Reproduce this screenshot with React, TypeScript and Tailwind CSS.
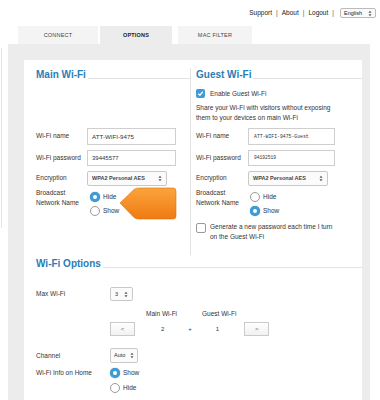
import React from 'react';

const Radio = ({ checked }: { checked?: boolean }) =>
  checked ? (
    <span className="w-[10px] h-[10px] rounded-full border-[3px] border-[#3f9bd6] bg-white shrink-0 shadow-[0_0_1px_#1c6fa8]" />
  ) : (
    <span className="w-[10px] h-[10px] rounded-full border border-[#9a9a9a] bg-white shrink-0" />
  );

const Arrows = () => (
  <svg width="4" height="7" viewBox="0 0 4 7" className="shrink-0">
    <path d="M0.5 2.8 L2 0.8 L3.5 2.8 Z M0.5 4.2 L2 6.2 L3.5 4.2 Z" fill="#555" />
  </svg>
);

const Heading = ({ children, className = '' }: { children: React.ReactNode; className?: string }) => (
  <div className={`flex items-end h-[12px] ${className}`}>
    <span className="text-[10px] font-bold leading-[12px] text-[#2a7db6]">{children}</span>
    <span className="flex-1 h-px bg-[#e2e2e2] ml-[2px] mb-[2px]" />
  </div>
);

export default function App() {
  return (
    <div className="w-[380px] h-[400px] overflow-hidden bg-white text-[#333] font-['Liberation_Sans',Arial,sans-serif]">
      {/* barra superior */}
      <div className="h-[26px] flex items-center justify-end pr-[4px] text-[6.5px] text-[#222]">
        <span>Support</span>
        <span className="mx-[4px] text-[#555]">|</span>
        <span>About</span>
        <span className="mx-[4px] text-[#555]">|</span>
        <span>Logout</span>
        <span className="mx-[4px] text-[#555]">|</span>
        <span className="ml-[2px] h-[10px] w-[36px] border border-[#bbb] rounded-[2px] flex items-center justify-between px-[3px] text-[5.5px] bg-[#fafafa]">
          English <Arrows />
        </span>
      </div>

      {/* abas */}
      <div className="flex h-[18px] pl-[18px] text-[5.5px] tracking-[0.2px]">
        <div className="w-[80px] bg-[#f4f4f4] flex items-center justify-center text-[#444]">CONNECT</div>
        <div className="w-[72px] ml-[2px] bg-[#ececec] flex items-center justify-center font-bold text-[#222]">OPTIONS</div>
        <div className="w-[74px] ml-[6px] bg-[#f4f4f4] flex items-center justify-center text-[#444]">MAC FILTER</div>
      </div>

      <div className="flex">
        <div className="w-px ml-px mt-[4px] h-[180px] bg-[#e4e4e4]" />
        <div className="ml-[6px] w-[362px] h-[356px] bg-[#ececec] pt-[16px] pl-[16px] pr-[8px]">
          <div className="bg-white h-[340px] relative">
            {/* seção superior com duas colunas */}
            <div className="flex h-[195px]">
              {/* Main Wi-Fi */}
              <div className="w-[166px] pl-[12px] pt-[9px] relative">
                <Heading>Main Wi-Fi</Heading>
                <div className="h-[47px]" />
                <div className="flex h-[17px] items-start">
                  <span className="w-[51px] text-[6.5px] pt-[3px]">Wi-Fi name</span>
                  <span className="w-[89px] h-[17px] border border-[#cfcfcf] flex items-center pl-[4px] text-[6.2px]">ATT-WIFI-9475</span>
                </div>
                <div className="flex h-[16px] items-start mt-[5px]">
                  <span className="w-[51px] text-[6.5px] pt-[3px]">Wi-Fi password</span>
                  <span className="w-[89px] h-[16px] border border-[#cfcfcf] flex items-center pl-[4px] text-[6px]">39445577</span>
                </div>
                <div className="flex h-[15px] items-start mt-[5px]">
                  <span className="w-[51px] text-[6.5px] pt-[2px]">Encryption</span>
                  <span className="w-[80px] h-[15px] border border-[#c8c8c8] rounded-[2px] flex items-center justify-between px-[4px] text-[5.5px] font-bold text-[#444] bg-[#fbfbfb]">
                    WPA2 Personal AES <Arrows />
                  </span>
                </div>
                <div className="flex mt-[2px]">
                  <span className="w-[51px] text-[6.5px] leading-[10px]">Broadcast<br />Network Name</span>
                  <div className="flex flex-col pt-[4px] pl-[3px] gap-[4px]">
                    <div className="flex items-center gap-[3px] text-[6.5px]"><Radio checked />Hide</div>
                    <div className="flex items-center gap-[3px] text-[6.5px]"><Radio />Show</div>
                  </div>
                </div>
                {/* seta laranja */}
                <svg width="60" height="34" viewBox="0 0 60 34" className="absolute left-[95px] top-[127px]">
                  <defs>
                    <linearGradient id="og" x1="0" y1="0" x2="0" y2="1">
                      <stop offset="0" stopColor="#fba43c" />
                      <stop offset="1" stopColor="#ef7a12" />
                    </linearGradient>
                  </defs>
                  <path d="M1 16 L15 2.5 Q17 1 20 1 L54 1 Q57 1 57 4 L57 29 Q57 32 54 32 L20 32 Q17 32 15 30.5 Z" fill="url(#og)" stroke="#e06e0c" strokeWidth="0.6" />
                </svg>
              </div>

              <div className="w-px bg-[#e2e2e2] mt-[8px]" />

              {/* Guest Wi-Fi */}
              <div className="flex-1 pl-[5px] pt-[9px]">
                <Heading>Guest Wi-Fi</Heading>
                <div className="flex items-center mt-[8px] h-[9px] gap-[5px] text-[6.5px]">
                  <span className="w-[9px] h-[9px] rounded-[2px] bg-[#3f9bd6] flex items-center justify-center">
                    <svg width="7" height="7" viewBox="0 0 7 7"><path d="M1.2 3.6 L2.9 5.2 L5.9 1.6" stroke="#fff" strokeWidth="1.3" fill="none" /></svg>
                  </span>
                  Enable Guest Wi-Fi
                </div>
                <div className="text-[6.5px] leading-[10px] mt-[5px] h-[25px]">
                  Share your Wi-Fi with visitors without exposing<br />them to your devices on main Wi-Fi
                </div>
                <div className="flex h-[17px] items-start">
                  <span className="w-[52px] text-[6.5px] pt-[3px]">Wi-Fi name</span>
                  <span className="w-[87px] h-[17px] border border-[#cfcfcf] flex items-center pl-[5px] text-[4.8px] font-['Liberation_Mono',monospace]">ATT-WIFI-9475-Guest</span>
                </div>
                <div className="flex h-[16px] items-start mt-[5px]">
                  <span className="w-[52px] text-[6.5px] pt-[3px]">Wi-Fi password</span>
                  <span className="w-[87px] h-[16px] border border-[#cfcfcf] flex items-center pl-[5px] text-[4.6px] font-['Liberation_Mono',monospace]">94192519</span>
                </div>
                <div className="flex h-[15px] items-start mt-[5px]">
                  <span className="w-[52px] text-[6.5px] pt-[2px]">Encryption</span>
                  <span className="w-[80px] h-[15px] border border-[#c8c8c8] rounded-[2px] flex items-center justify-between px-[4px] text-[5.5px] font-bold text-[#444] bg-[#fbfbfb]">
                    WPA2 Personal AES <Arrows />
                  </span>
                </div>
                <div className="flex mt-[2px]">
                  <span className="w-[52px] text-[6.5px] leading-[10px]">Broadcast<br />Network Name</span>
                  <div className="flex flex-col pt-[4px] pl-[2px] gap-[4px]">
                    <div className="flex items-center gap-[3px] text-[6.5px]"><Radio />Hide</div>
                    <div className="flex items-center gap-[3px] text-[6.5px]"><Radio checked />Show</div>
                  </div>
                </div>
                <div className="flex mt-[6px] gap-[4px]">
                  <span className="w-[10px] h-[10px] border border-[#9a9a9a] rounded-[2px] bg-white shrink-0 mt-[1px]" />
                  <span className="text-[6.5px] leading-[10px]">Generate a new password each time I turn<br />on the Guest Wi-Fi</span>
                </div>
              </div>
            </div>

            {/* Wi-Fi Options */}
            <div className="pl-[12px] pt-[3px]">
              <Heading>Wi-Fi Options</Heading>
              <div className="flex items-center mt-[17px] h-[14px]">
                <span className="w-[74px] text-[6.5px]">Max Wi-Fi</span>
                <span className="w-[23px] h-[14px] border border-[#c8c8c8] rounded-[2px] flex items-center justify-between px-[4px] text-[5.5px] bg-[#fbfbfb]">
                  3 <Arrows />
                </span>
              </div>
              <div className="flex mt-[8px] text-[6.5px] h-[10px] items-center">
                <span className="ml-[110px]">Main Wi-Fi</span>
                <span className="ml-[25px]">Guest Wi-Fi</span>
              </div>
              <div className="flex items-center mt-[3px] h-[14px] text-[6px]">
                <span className="ml-[74px] w-[25px] h-[14px] border border-[#cacaca] bg-gradient-to-b from-white to-[#f1f1f1] flex items-center justify-center text-[#666]">&lt;</span>
                <span className="ml-[26px]">2</span>
                <span className="ml-[24px]">+</span>
                <span className="ml-[24px]">1</span>
                <span className="ml-[25px] w-[25px] h-[14px] border border-[#cacaca] bg-gradient-to-b from-white to-[#f1f1f1] flex items-center justify-center text-[#666]">&gt;</span>
              </div>
              <div className="flex items-center mt-[12px] h-[15px]">
                <span className="w-[74px] text-[6.5px]">Channel</span>
                <span className="w-[28px] h-[15px] border border-[#c8c8c8] rounded-[2px] flex items-center justify-between px-[3px] text-[5.5px] bg-[#fbfbfb]">
                  Auto <Arrows />
                </span>
              </div>
              <div className="flex mt-[4px]">
                <span className="w-[74px] text-[6.5px] pt-[1px]">Wi-Fi Info on Home</span>
                <div className="flex flex-col pt-[1px] gap-[5px]">
                  <div className="flex items-center gap-[3px] text-[6.5px]"><Radio checked />Show</div>
                  <div className="flex items-center gap-[3px] text-[6.5px]"><Radio />Hide</div>
                </div>
              </div>
            </div>
          </div>
        </div>
      </div>
    </div>
  );
}
